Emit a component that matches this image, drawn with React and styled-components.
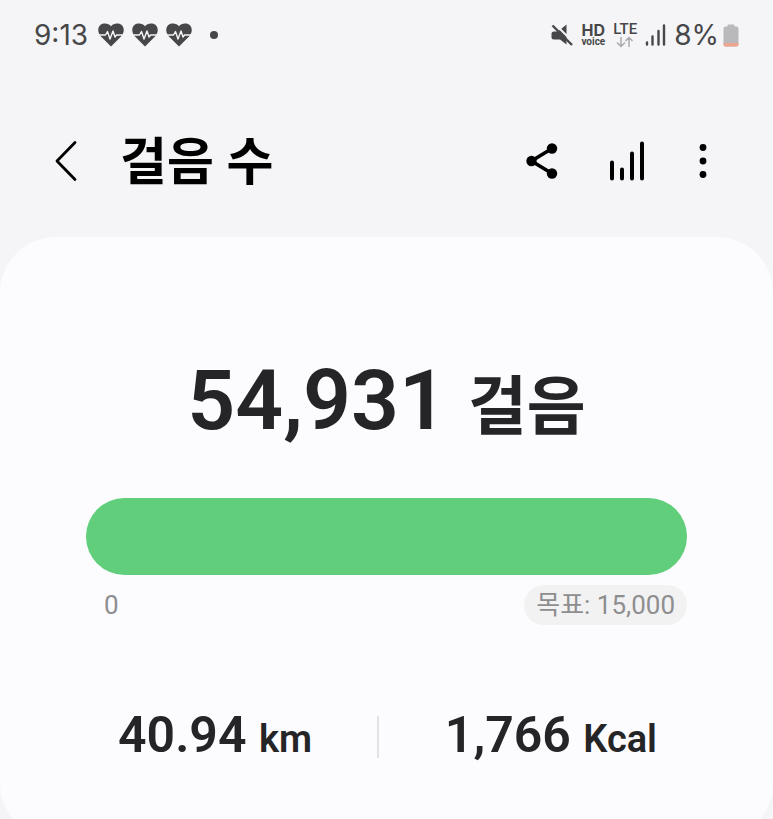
import { Fragment } from "react";
import styled, { createGlobalStyle } from "styled-components";

const stats = [
  { value: "40.94", unit: "km" },
  { value: "1,766", unit: "Kcal" },
];

function HeartIcon() {
  return (
    <svg width="26" height="24" viewBox="0 0 26 24" aria-hidden="true">
      <path
        d="M13 23.5 L2.5 13 C-1 9 -0.5 2.5 4.5 0.8 C8 -0.2 11 0.8 13 3.2 C15 0.8 18 -0.2 21.5 0.8 C26.5 2.5 27 9 23.5 13 Z"
        fill="#474749"
      />
      <path
        d="M0 12 H7.5 L9.5 8.5 L12 16 L15 8 L17 14 L18.5 12 H26"
        fill="none"
        stroke="#f5f5f7"
        strokeWidth="1.4"
        strokeLinejoin="round"
      />
    </svg>
  );
}

function MuteIcon() {
  return (
    <svg width="22" height="22" viewBox="0 0 22 22" aria-hidden="true">
      <path d="M0.5 10 Q0.5 7.5 3 7.5 H7 L15.5 0.5 V20.5 L9 15.5 H3 Q0.5 15.5 0.5 13 Z" fill="#474749" />
      <path d="M4.5 0.5 L22 18" stroke="#f5f5f7" strokeWidth="2" />
      <path d="M1.5 1.5 L21 21" stroke="#474749" strokeWidth="2.4" />
    </svg>
  );
}

function DataArrowsIcon() {
  return (
    <svg width="18" height="12" viewBox="0 0 18 12" aria-hidden="true">
      <path
        d="M5 1 V10 M1 6.5 L5 10.5 L9 6.5 M13 11 V2 M9.5 5 L13 1.5 L16.5 5"
        fill="none"
        stroke="#ababad"
        strokeWidth="1.5"
      />
    </svg>
  );
}

function SignalIcon() {
  return (
    <svg width="21" height="22" viewBox="0 0 21 22" aria-hidden="true">
      <path
        d="M2 18.5 V20.5 M7.5 12.5 V20.5 M13.5 7 V20.5 M19 1.5 V20.5"
        stroke="#474749"
        strokeWidth="2.4"
        strokeLinecap="round"
      />
    </svg>
  );
}

function BatteryIcon() {
  return (
    <svg width="16" height="23" viewBox="0 0 16 23" aria-hidden="true">
      <path
        d="M4.5 2.5 V1.5 Q4.5 0.5 5.5 0.5 H10.5 Q11.5 0.5 11.5 1.5 V2.5 H13.5 Q15.5 2.5 15.5 4.5 V20.5 Q15.5 22.5 13.5 22.5 H2.5 Q0.5 22.5 0.5 20.5 V4.5 Q0.5 2.5 2.5 2.5 Z"
        fill="#b9b9bb"
      />
      <path d="M0.5 19 H15.5 V20.5 Q15.5 22.5 13.5 22.5 H2.5 Q0.5 22.5 0.5 20.5 Z" fill="#eda58f" />
    </svg>
  );
}

function BackIcon() {
  return (
    <svg width="24" height="42" viewBox="0 0 24 42" aria-hidden="true">
      <path
        d="M21 2.5 L3 21 L21 39.5"
        fill="none"
        stroke="#000"
        strokeWidth="2.8"
        strokeLinecap="round"
        strokeLinejoin="round"
      />
    </svg>
  );
}

function ShareIcon() {
  return (
    <svg width="34" height="38" viewBox="0 0 34 38" aria-hidden="true">
      <path d="M26 6.5 L5.5 19 L26 31.5" fill="none" stroke="#000" strokeWidth="3.6" />
      <circle cx="26" cy="6.5" r="5.2" />
      <circle cx="5.5" cy="19" r="5.2" />
      <circle cx="26" cy="31.5" r="5.2" />
    </svg>
  );
}

function ChartIcon() {
  return (
    <svg width="36" height="42" viewBox="0 0 36 42" aria-hidden="true">
      <path
        d="M3 22.5 V38.5 M13 29.5 V38.5 M23 13.5 V38.5 M33 3.5 V38.5"
        stroke="#000"
        strokeWidth="4"
        strokeLinecap="round"
      />
    </svg>
  );
}

function MoreIcon() {
  return (
    <svg width="8" height="36" viewBox="0 0 8 36" aria-hidden="true">
      <circle cx="4" cy="4.5" r="3.4" />
      <circle cx="4" cy="18" r="3.4" />
      <circle cx="4" cy="31.5" r="3.4" />
    </svg>
  );
}

function App() {
  return (
    <Page>
      <GlobalStyle />
      <StatusBar>
        <StatusGroup $gap={10}>
          <StatusText>9:13</StatusText>
          <Hearts>
            <HeartIcon />
            <HeartIcon />
            <HeartIcon />
          </Hearts>
          <Dot />
        </StatusGroup>
        <StatusGroup $gap={8}>
          <MuteIcon />
          <Badge>
            <BadgeTop $wide>HD</BadgeTop>
            <BadgeBottom>voice</BadgeBottom>
          </Badge>
          <Badge>
            <BadgeTop>LTE</BadgeTop>
            <DataArrowsIcon />
          </Badge>
          <SignalIcon />
          <Battery>
            <StatusText>8%</StatusText>
            <BatteryIcon />
          </Battery>
        </StatusGroup>
      </StatusBar>

      <Header>
        <IconButton aria-label="뒤로">
          <BackIcon />
        </IconButton>
        <Title>걸음 수</Title>
        <Actions>
          <IconButton aria-label="공유">
            <ShareIcon />
          </IconButton>
          <IconButton aria-label="차트">
            <ChartIcon />
          </IconButton>
          <IconButton $slim aria-label="더보기">
            <MoreIcon />
          </IconButton>
        </Actions>
      </Header>

      <Card>
        <Steps>
          54,931 <StepsUnit>걸음</StepsUnit>
        </Steps>
        <Track role="progressbar" aria-label="걸음 수" aria-valuenow={15000} aria-valuemin={0} aria-valuemax={15000}>
          <Fill />
        </Track>
        <Scale>
          <span>0</span>
          <Goal>목표: 15,000</Goal>
        </Scale>
        <Stats>
          {stats.map(({ value, unit }, i) => (
            <Fragment key={unit}>
              {i > 0 && <Divider />}
              <Stat>
                {value} <StatUnit>{unit}</StatUnit>
              </Stat>
            </Fragment>
          ))}
        </Stats>
      </Card>
    </Page>
  );
}

const GlobalStyle = createGlobalStyle`
  * {
    box-sizing: border-box;
  }
  body {
    margin: 0;
    background: #f5f5f7;
    font-family: Roboto, "Noto Sans CJK KR", sans-serif;
  }
  svg {
    display: block;
    flex-shrink: 0;
  }
`;

const Page = styled.main`
  height: 100vh;
  overflow: hidden;
  background: #f5f5f7;
`;

const StatusBar = styled.div`
  display: flex;
  align-items: center;
  justify-content: space-between;
  height: 70px;
  padding: 0 34px;
  color: #474749;
`;

const StatusGroup = styled.div`
  display: flex;
  align-items: center;
  gap: ${({ $gap }) => $gap}px;
`;

const StatusText = styled.span`
  font-family: Inter, sans-serif;
  font-size: 28px;
  line-height: 32px;
`;

const Hearts = styled.div`
  display: flex;
  gap: 8px;
`;

const Dot = styled.span`
  width: 8px;
  height: 8px;
  margin-left: 8px;
  border-radius: 50%;
  background: #474749;
`;

const Badge = styled.div`
  display: flex;
  flex-direction: column;
  align-items: center;
`;

const BadgeTop = styled.span`
  font-family: ${({ $wide }) => ($wide ? "Inter" : "Roboto")}, sans-serif;
  font-size: ${({ $wide }) => ($wide ? 16 : 15)}px;
  font-weight: ${({ $wide }) => ($wide ? 700 : 500)};
  line-height: 14px;
`;

const BadgeBottom = styled.span`
  font-family: Roboto, sans-serif;
  font-size: 10px;
  font-weight: 700;
  line-height: 10px;
`;

const Battery = styled.div`
  display: flex;
  align-items: center;
  gap: 4px;
`;

const Header = styled.header`
  display: flex;
  align-items: center;
  height: 167px;
  padding: 14px 56px 0 44px;
`;

const IconButton = styled.button`
  display: flex;
  align-items: center;
  justify-content: center;
  width: ${({ $slim }) => ($slim ? "28px" : "44px")};
  height: 48px;
  padding: 0;
  border: none;
  background: none;
  cursor: pointer;
`;

const Title = styled.h1`
  margin: 0;
  padding: 4px 0 0 32px;
  font-size: 51px;
  font-weight: 700;
  line-height: 60px;
  color: #000;
`;

const Actions = styled.div`
  display: flex;
  gap: 40px;
  margin-left: auto;
`;

const Card = styled.section`
  padding: 108px 86px 78px;
  border-radius: 56px;
  background: #fcfcfe;
  color: #252527;
`;

const Steps = styled.p`
  margin: 0;
  font-size: 84px;
  font-weight: 600;
  line-height: 112px;
  text-align: center;
  white-space: nowrap;
`;

const StepsUnit = styled.span`
  font-size: 64px;
`;

const Track = styled.div`
  height: 77px;
  margin-top: 34px;
  border-radius: 39px;
  background: #f2f2f3;
  overflow: hidden;
`;

const Fill = styled.div`
  width: 100%;
  height: 100%;
  background: #60ce7a;
`;

const Scale = styled.div`
  display: flex;
  align-items: center;
  justify-content: space-between;
  margin-top: 10px;
  padding-left: 18px;
  font-size: 26px;
  line-height: 40px;
  color: #8e8e90;
`;

const Goal = styled.span`
  padding: 0 12px;
  border-radius: 20px;
  background: #f2f2f3;
`;

const Stats = styled.div`
  display: flex;
  align-items: center;
  justify-content: space-between;
  margin-top: 88px;
  padding: 0 30px 0 32px;
`;

const Stat = styled.p`
  margin: 0;
  font-size: 50px;
  font-weight: 600;
  line-height: 44px;
  white-space: nowrap;
`;

const StatUnit = styled.span`
  font-size: 38px;
`;

const Divider = styled.span`
  width: 2px;
  height: 42px;
  background: #e2e2e4;
`;

export default App;
